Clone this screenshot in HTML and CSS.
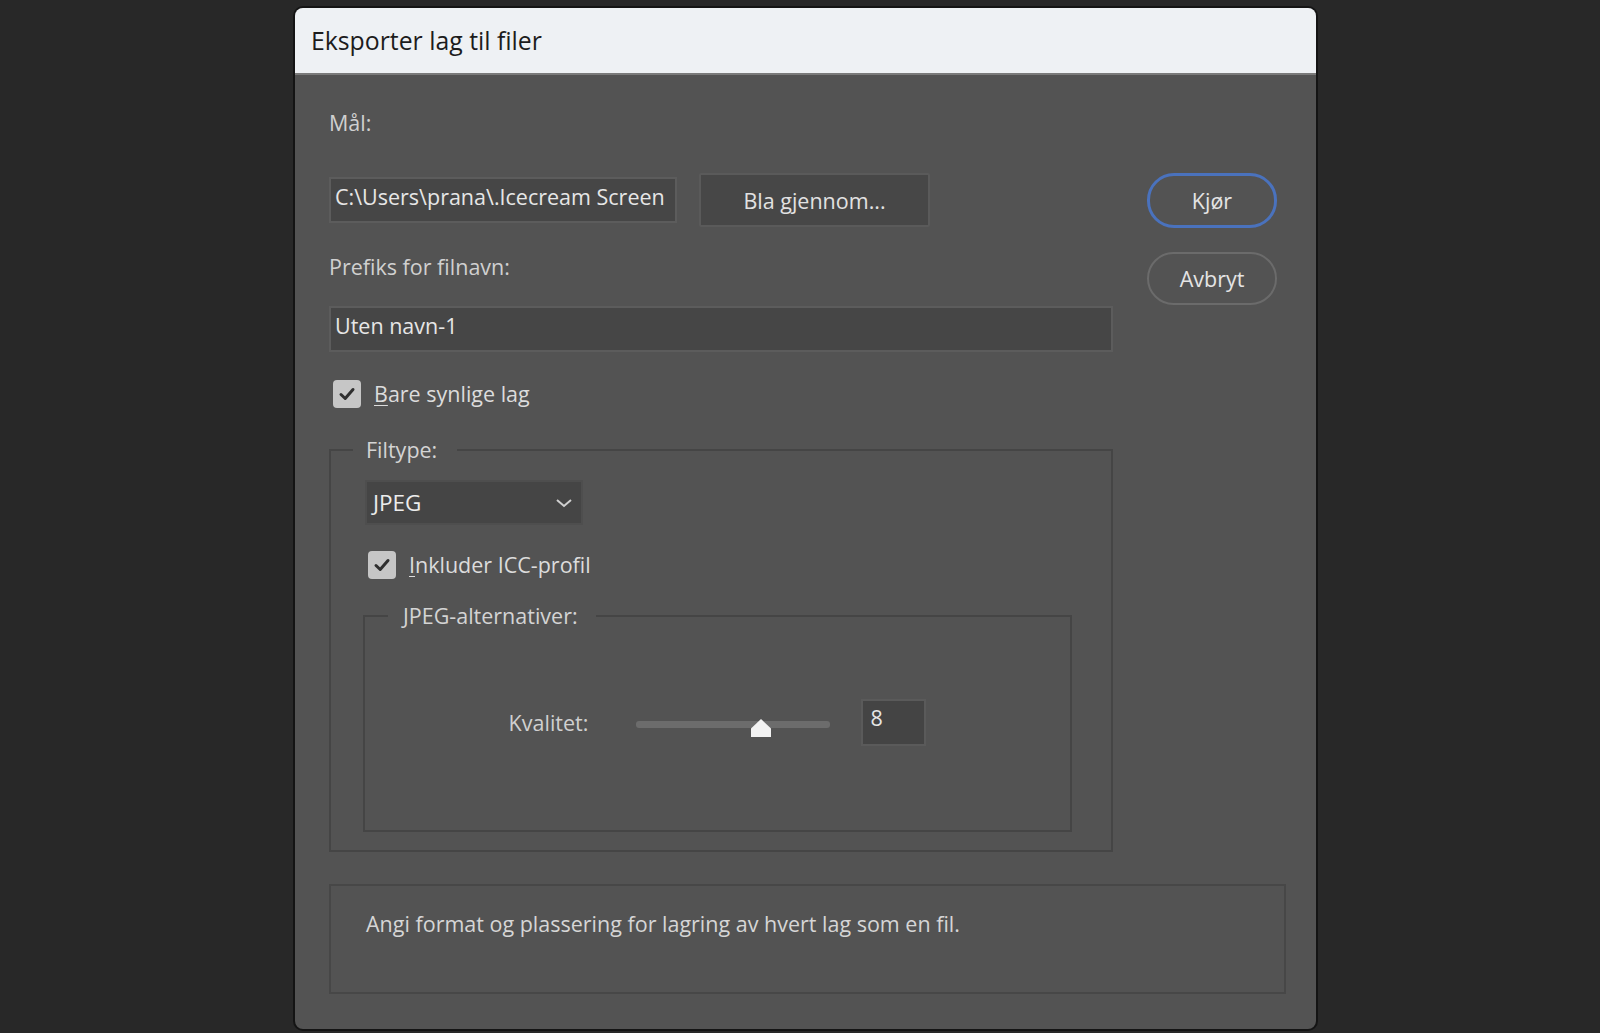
FILE: index.html
```html
<!DOCTYPE html>
<html lang="no">
<head>
<meta charset="utf-8">
<title>Eksporter lag til filer</title>
<link rel="stylesheet" href="styles.css">
</head>
<body>
<div class="dialog">
  <div class="titlebar">Eksporter lag til filer</div>
  <div class="content">
    <div class="top">
      <div class="main">
        <div class="label lbl-target">Mål:</div>
        <div class="path-row">
          <div class="input path-input">C:\Users\prana\.Icecream Screen</div>
          <div class="btn-browse">Bla gjennom...</div>
        </div>
        <div class="label lbl-prefix">Prefiks for filnavn:</div>
        <div class="input prefix-input">Uten navn-1</div>
        <div class="check-row row-visible">
          <span class="checkbox"><svg viewBox="0 0 28 28" width="28" height="28"><path d="M8 14.5 L12.2 18.5 L20 9.5" fill="none" stroke="#2f2f2f" stroke-width="3" stroke-linecap="round" stroke-linejoin="round"/></svg></span>
          <span class="check-label"><u>B</u>are synlige lag</span>
        </div>
        <fieldset class="group outer">
          <legend>Filtype:</legend>
          <div class="select">
            <span>JPEG</span>
            <svg class="chev" viewBox="0 0 18 10" width="18" height="10"><path d="M2 2 L9 8 L16 2" fill="none" stroke="#d0d0d0" stroke-width="2"/></svg>
          </div>
          <div class="check-row row-icc">
            <span class="checkbox"><svg viewBox="0 0 28 28" width="28" height="28"><path d="M8 14.5 L12.2 18.5 L20 9.5" fill="none" stroke="#2f2f2f" stroke-width="3" stroke-linecap="round" stroke-linejoin="round"/></svg></span>
            <span class="check-label"><u>I</u>nkluder ICC-profil</span>
          </div>
          <fieldset class="group inner">
            <legend>JPEG-alternativer:</legend>
            <div class="quality-row">
              <span class="label q-label">Kvalitet:</span>
              <svg class="slider" viewBox="0 0 196 26" width="196" height="26">
                <rect x="1" y="9" width="194" height="7" rx="3" fill="#6c6c6c"/>
                <path d="M116 16.5 V25 H136 V16.5 L126 7 Z" fill="#f2f2f2"/>
              </svg>
              <div class="input num-input">8</div>
            </div>
          </fieldset>
        </fieldset>
      </div>
      <div class="side">
        <div class="btn-pill primary">Kjør</div>
        <div class="btn-pill">Avbryt</div>
      </div>
    </div>
    <div class="desc">Angi format og plassering for lagring av hvert lag som en fil.</div>
  </div>
</div>
</body>
</html>
```
FILE: styles.css
```css
html, body {
  margin: 0;
  padding: 0;
}
body {
  background: #282828;
  width: 1600px;
  height: 1033px;
  overflow: hidden;
  font-family: "Open Sans", Roboto, "Liberation Sans", sans-serif;
  padding-top: 6px;
  box-sizing: border-box;
}
.dialog {
  margin-left: 293px;
  width: 1021px;
  height: 1021px;
  background: #535353;
  border: 2px solid #141414;
  border-radius: 10px;
  overflow: hidden;
  box-sizing: content-box;
}
.titlebar {
  background: #eef1f4;
  border-bottom: 2px solid #7a7a7a;
  color: #1c1c1c;
  font-size: 24.8px;
  line-height: 64px;
  padding-left: 16px;
  box-sizing: border-box;
  height: 67px;
}
.content {
  padding-left: 34px;
}
.top {
  display: flex;
  gap: 34px;
}
.main {
  width: 784px;
  display: flex;
  flex-direction: column;
  align-items: flex-start;
}
.label {
  color: #d0d0d0;
  font-size: 21.5px;
  line-height: 24px;
}
.lbl-target {
  margin-top: 36px;
}
.path-row {
  margin-top: 38px;
  display: flex;
  align-items: center;
  gap: 22px;
}
.input {
  background: #464646;
  border: 2px solid #5c5c5c;
  color: #e6e6e6;
  font-size: 21.5px;
  box-sizing: border-box;
  white-space: nowrap;
  overflow: hidden;
}
.path-input {
  width: 348px;
  height: 46px;
  line-height: 36px;
  padding-left: 4px;
}
.btn-browse {
  width: 231px;
  height: 54px;
  box-sizing: border-box;
  background: #474747;
  border: 2px solid #5a5a5a;
  border-radius: 2px;
  color: #e2e2e2;
  font-size: 21.5px;
  display: flex;
  align-items: center;
  justify-content: center;
}
.lbl-prefix {
  margin-top: 28px;
}
.prefix-input {
  margin-top: 27px;
  width: 784px;
  height: 46px;
  line-height: 36px;
  padding-left: 4px;
}
.check-row {
  display: flex;
  align-items: center;
  gap: 13px;
  color: #dcdcdc;
  font-size: 21.5px;
  line-height: 28px;
}
.row-visible {
  margin-top: 28px;
  margin-left: 4px;
}
.checkbox {
  width: 28px;
  height: 28px;
  background: #c6c6c6;
  border-radius: 4px;
  display: block;
}
.checkbox svg {
  display: block;
}
.check-label u {
  text-decoration-thickness: 1px;
  text-underline-offset: 3px;
}
.group {
  border: 2px solid #454545;
  margin: 0;
  min-width: 0;
  box-sizing: border-box;
}
.group legend {
  color: #d4d4d4;
  font-size: 21.5px;
  line-height: 24px;
}
.outer {
  margin-top: 30px;
  width: 784px;
  padding: 18px 41px 18px 34px;
}
.outer > legend {
  margin-left: -12px;
  padding: 0 20px 0 13px;
}
.select {
  width: 218px;
  height: 45px;
  box-sizing: border-box;
  background: #454545;
  border: 2px solid #4e4e4e;
  display: flex;
  align-items: center;
  justify-content: space-between;
  padding: 0 8px 0 6px;
  color: #ececec;
  font-size: 22.5px;
}
.chev {
  display: block;
}
.row-icc {
  margin-top: 26px;
  margin-left: 3px;
}
.inner {
  margin-top: 25px;
  margin-left: -2px;
  width: 709px;
  padding: 71px 0 84px 0;
}
.inner > legend {
  margin-left: 23px;
  padding: 0 18px 0 15px;
}
.quality-row {
  display: flex;
  align-items: center;
  justify-content: center;
}
.q-label {
  margin-right: 47px;
}
.slider {
  display: block;
  margin-right: 30px;
  margin-top: 4px;
}
.num-input {
  width: 65px;
  height: 47px;
  padding: 5px 0 0 7px;
  line-height: 24px;
  border-color: #5a5a5a;
  background: #444444;
}
.side {
  padding-top: 98px;
  display: flex;
  flex-direction: column;
  gap: 24px;
}
.btn-pill {
  width: 130px;
  height: 53px;
  box-sizing: border-box;
  border: 2px solid #6b6b6b;
  border-radius: 27px;
  color: #e4e4e4;
  font-size: 21.5px;
  display: flex;
  align-items: center;
  justify-content: center;
}
.btn-pill.primary {
  border: 3px solid #4a72bd;
  height: 55px;
}
.desc {
  margin-top: 32px;
  width: 957px;
  height: 110px;
  box-sizing: border-box;
  border: 2px solid #474747;
  padding: 26px 0 0 35px;
  color: #d6d6d6;
  font-size: 21.5px;
  line-height: 24px;
}
```
